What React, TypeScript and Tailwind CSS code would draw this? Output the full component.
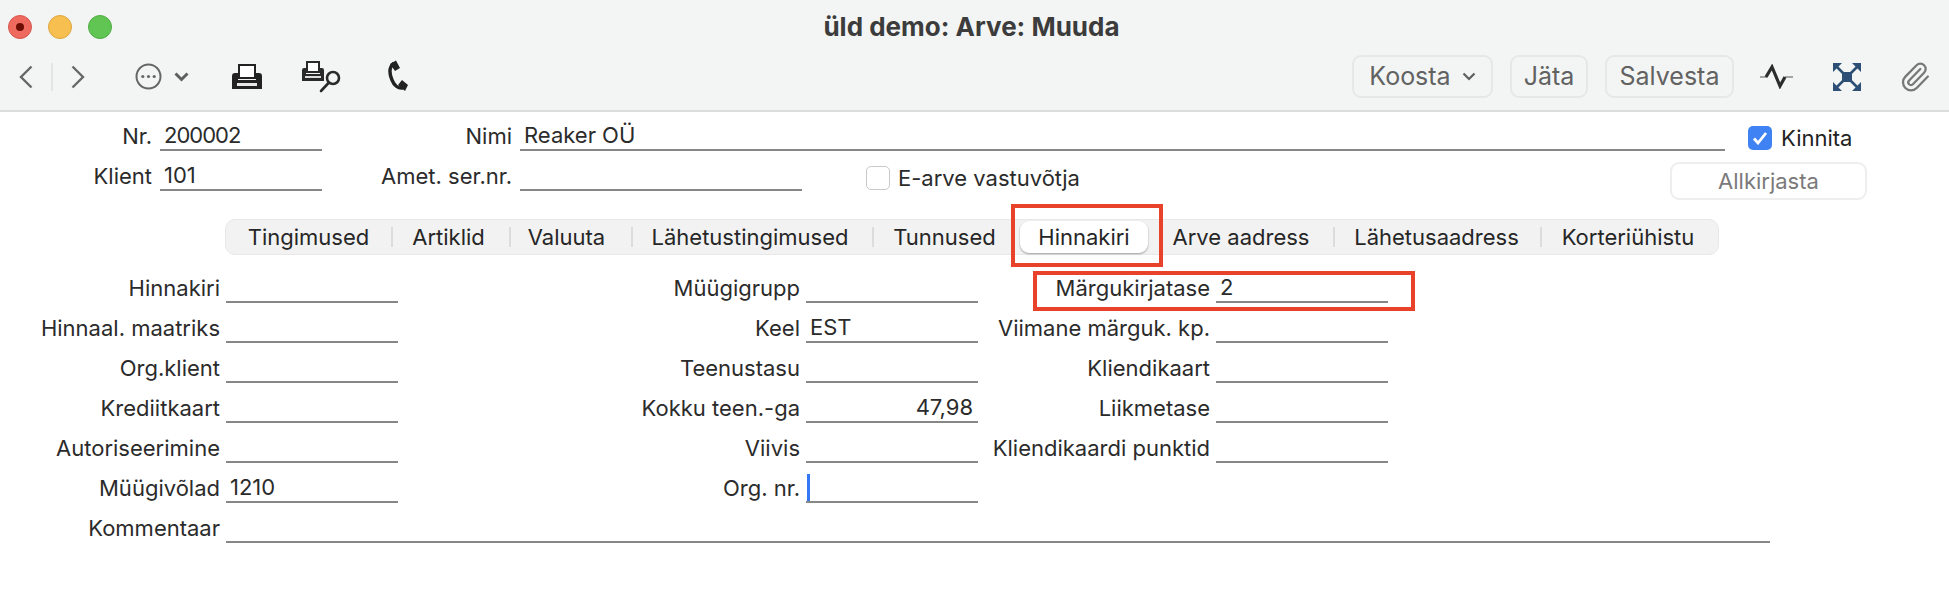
import React from "react";
import { Paperclip } from "lucide-react";

function Field({ label, value, labelW, lineW, gap = 6, right = false, pad = 4 }: { label: string; value?: React.ReactNode; labelW: number; lineW: number; gap?: number; right?: boolean; pad?: number }) {
  return (
    <div className="flex items-end shrink-0">
      <div className="text-right text-[22px] leading-[30px] text-[#2b2b2b] whitespace-nowrap" style={{ width: labelW }}>{label}</div>
      <div className={`h-[32px] border-b-2 border-[#878787] text-[22px] leading-[32px] text-[#2b2b2b] whitespace-nowrap ${right ? "text-right pr-[5px]" : ""}`} style={{ width: lineW, marginLeft: gap, paddingLeft: right ? 0 : pad }}>{value}</div>
    </div>
  );
}

function FormRow({ a, av, b, bv, c, cv, bRight, caret }: { a: string; av?: string; b: string; bv?: string; c?: string; cv?: string; bRight?: boolean; caret?: boolean }) {
  return (
    <div className="flex items-end h-[40px]">
      <Field label={a} value={av} labelW={220} lineW={172} />
      <div className="relative">
        <Field label={b} value={bv} labelW={402} lineW={172} right={bRight} />
        {caret && <div className="absolute left-[409px] bottom-[2px] w-[3px] h-[27px] bg-[#3478f6]" />}
      </div>
      {c && <Field label={c} value={cv} labelW={232} lineW={172} />}
    </div>
  );
}

function ToolButton({ children, w }: { children: React.ReactNode; w: number }) {
  return (
    <div className="h-[43px] flex items-center justify-center rounded-[9px] border-2 border-[#e6e8e7] text-[25px] text-[#626262] shrink-0" style={{ width: w }}>{children}</div>
  );
}

function Tab({ label, w, active, shift = 0 }: { label: string; w: number; active?: boolean; shift?: number }) {
  return (
    <div className="h-full flex items-center justify-center shrink-0 text-[22px] text-[#262626] whitespace-nowrap" style={{ width: w, paddingRight: shift }}>
      {active ? (
        <div className="w-[128px] h-[32px] flex items-center justify-center bg-white rounded-[9px] shadow-[0_1px_2px_rgba(0,0,0,0.35)]">{label}</div>
      ) : label}
    </div>
  );
}

const Sep = () => <div className="w-[2px] h-[20px] bg-[#dcdcdc] shrink-0" />;

export default function App() {
  return (
    <div className="relative w-[1949px] h-[590px] overflow-hidden bg-white" style={{ fontFamily: "Inter, 'Liberation Sans', sans-serif" }}>
      {/* Title bar + toolbar */}
      <header className="h-[112px] bg-[#f3f5f4] border-b-2 border-[#dcdddc]">
        <div className="relative h-[55px] flex items-center justify-center">
          <div className="absolute left-[8px] top-[15px] flex gap-[16px]">
            <div className="w-[24px] h-[24px] rounded-full bg-[#ee6a5f] border border-[#d9574d] flex items-center justify-center">
              <div className="w-[8px] h-[8px] rounded-full bg-[#6d0e05]" />
            </div>
            <div className="w-[24px] h-[24px] rounded-full bg-[#f6bf4f] border border-[#dfa63c]" />
            <div className="w-[24px] h-[24px] rounded-full bg-[#61c554] border border-[#50ad44]" />
          </div>
          <span className="text-[26px] leading-[30px] font-bold text-[#3c3c3c] pb-[2px] pr-[6px]">üld demo: Arve: Muuda</span>
        </div>
        <div className="h-[43px] flex items-center pl-[19px]">
          <svg width="14" height="24" viewBox="0 0 14 24" className="shrink-0"><path d="M12.5 1.5 2 12l10.5 10.5" fill="none" stroke="#676767" strokeWidth="2.4" /></svg>
          <div className="ml-[18px] w-[2px] h-[28px] bg-[#e3e4e3] shrink-0" />
          <svg width="14" height="24" viewBox="0 0 14 24" className="ml-[18px] shrink-0"><path d="M1.5 1.5 12 12 1.5 22.5" fill="none" stroke="#676767" strokeWidth="2.4" /></svg>
          <svg width="27" height="27" viewBox="0 0 27 27" className="ml-[50px] shrink-0">
            <circle cx="13.5" cy="13.5" r="12" fill="none" stroke="#666" strokeWidth="2" />
            <circle cx="7.8" cy="13.5" r="1.6" fill="#666" /><circle cx="13.5" cy="13.5" r="1.6" fill="#666" /><circle cx="19.2" cy="13.5" r="1.6" fill="#666" />
          </svg>
          <svg width="15" height="10" viewBox="0 0 15 10" className="ml-[12px] shrink-0"><path d="M1.5 1.5 7.5 7.5 13.5 1.5" fill="none" stroke="#5f5f5f" strokeWidth="3" /></svg>
          <svg width="32" height="26" viewBox="0 0 32 26" className="ml-[42px] shrink-0">
            <rect x="8" y="1" width="16" height="13" fill="#fff" stroke="#222" strokeWidth="2" />
            <path d="M4 9h3v7h18V9h3a3 3 0 0 1 3 3v13H1V12a3 3 0 0 1 3-3Z" fill="#222" />
            <rect x="6" y="19" width="20" height="3" fill="#e8e8e8" />
          </svg>
          <svg width="42" height="32" viewBox="0 0 42 32" className="ml-[38px] shrink-0">
            <rect x="6" y="1" width="12" height="10" fill="#fff" stroke="#2a2a2a" strokeWidth="2" />
            <path d="M3 7h2v6h14V7h2a2 2 0 0 1 2 2v11H1V9a2 2 0 0 1 2-2Z" fill="#2a2a2a" />
            <rect x="4" y="15" width="16" height="2" fill="#ddd" />
            <circle cx="32" cy="17" r="6" fill="#f3f5f4" stroke="#2a2a2a" strokeWidth="2.6" />
            <path d="M27.5 22 20 30" stroke="#2a2a2a" strokeWidth="2.6" strokeLinecap="round" />
          </svg>
          <svg width="22" height="33" viewBox="0 0 22 33" className="ml-[44px] shrink-0">
            <path d="M7 3C2 7 2 13 5 20c2 5 6 9 11 8" fill="none" stroke="#222" strokeWidth="3.4" />
            <path d="M3 4 9 0.5 13 8 8 11Z" fill="#222" />
            <path d="M11 25 15 20 21 25 18 31Z" fill="#222" />
          </svg>
          <div className="flex-1" />
          <ToolButton w={141}>
            <span className="mr-[11px]">Koosta</span>
            <svg width="14" height="9" viewBox="0 0 14 9"><path d="M1.5 1.5 7 7l5.5-5.5" fill="none" stroke="#5f5f5f" strokeWidth="2.2" /></svg>
          </ToolButton>
          <div className="ml-[17px]"><ToolButton w={78}>Jäta</ToolButton></div>
          <div className="ml-[17px]"><ToolButton w={129}>Salvesta</ToolButton></div>
          <svg width="33" height="25" viewBox="0 0 33 25" className="ml-[26px] shrink-0">
            <path d="M0 13h7M25 13h8" fill="none" stroke="#8a8a8a" strokeWidth="1.6" />
            <path d="M6 13l6-10 8 19 5-9" fill="none" stroke="#2c2c2c" strokeWidth="3.2" />
          </svg>
          <svg width="28" height="28" viewBox="0 0 28 28" className="ml-[40px] shrink-0" fill="#2e4f75" stroke="#2e4f75">
            <rect x="9" y="9" width="10" height="10" strokeWidth="0" />
            <path d="M0 0h9L0 9Z M28 0v9L19 0Z M0 28v-9L9 28Z M28 28h-9L28 19Z" strokeWidth="0" />
            <path d="M4 4 10 10M24 4 18 10M4 24 10 18M24 24 18 18" strokeWidth="2.6" />
          </svg>
          <Paperclip size={32} color="#777" strokeWidth={1.7} className="ml-[38px] mr-[18px] shrink-0" />
        </div>
      </header>

      {/* Top fields */}
      <div className="flex items-end h-[39px]">
        <Field label="Nr." value={<span className="tracking-[-1px]">200002</span>} labelW={152} lineW={162} gap={8} />
        <Field label="Nimi" value="Reaker OÜ" labelW={190} lineW={1205} gap={8} />
        <div className="flex items-center ml-[23px] h-[24px] mb-[1px]">
          <div className="w-[24px] h-[24px] rounded-[5px] bg-[#3f82f4] flex items-center justify-center">
            <svg width="16" height="14" viewBox="0 0 16 14"><path d="M2 7.500 6 12 14 2" fill="none" stroke="#fff" strokeWidth="2.8" /></svg>
          </div>
          <span className="ml-[9px] text-[22px] leading-[28px] text-[#222]">Kinnita</span>
        </div>
      </div>
      <div className="flex items-start h-[49px]">
        <div className="flex items-end h-[40px]">
          <Field label="Klient" value="101" labelW={152} lineW={162} gap={8} />
          <Field label="Amet. ser.nr." labelW={190} lineW={282} gap={8} />
          <div className="flex items-center ml-[64px] mb-[1px] h-[24px] self-end">
            <div className="w-[24px] h-[24px] rounded-[5px] border border-[#c9c9c9] bg-white shrink-0" />
            <span className="ml-[8px] text-[22px] leading-[28px] text-[#2b2b2b] whitespace-nowrap">E-arve vastuvõtja</span>
          </div>
        </div>
        <div className="ml-auto mr-[82px] mt-[11px] w-[197px] h-[38px] rounded-[9px] border-2 border-[#eeeeee] flex items-center justify-center text-[22px] text-[#7a7a7a]">Allkirjasta</div>
      </div>

      {/* Tabs */}
      <div className="mt-[19px] ml-[225px] w-[1494px] h-[36px] rounded-[10px] bg-[#f2f2f2] border border-[#e8e8e8] flex items-center">
        <Tab label="Tingimused" w={165} /><Sep />
        <Tab label="Artiklid" w={116} shift={5} /><Sep />
        <Tab label="Valuuta" w={120} shift={9} /><Sep />
        <Tab label="Lähetustingimused" w={239} shift={5} /><Sep />
        <Tab label="Tunnused" w={141} />
        <Tab label="Hinnakiri" w={138} active />
        <Tab label="Arve aadress" w={180} shift={4} /><Sep />
        <Tab label="Lähetusaadress" w={205} shift={2} /><Sep />
        <Tab label="Korteriühistu" w={176} shift={4} />
      </div>

      {/* Main form */}
      <div className="mt-[8px]">
        <FormRow a="Hinnakiri" b="Müügigrupp" c="Märgukirjatase" cv="2" />
        <FormRow a="Hinnaal. maatriks" b="Keel" bv="EST" c="Viimane märguk. kp." />
        <FormRow a="Org.klient" b="Teenustasu" c="Kliendikaart" />
        <FormRow a="Krediitkaart" b="Kokku teen.-ga" bv="47,98" bRight c="Liikmetase" />
        <FormRow a="Autoriseerimine" b="Viivis" c="Kliendikaardi punktid" />
        <FormRow a="Müügivõlad" av="1210" b="Org. nr." caret />
        <div className="flex items-end h-[40px]">
          <Field label="Kommentaar" labelW={220} lineW={1544} />
        </div>
      </div>

      {/* Red annotation boxes */}
      <div className="absolute left-[1011px] top-[204px] w-[152px] h-[63px] border-4 border-[#e8432a]" />
      <div className="absolute left-[1033px] top-[271px] w-[382px] h-[40px] border-4 border-[#e8432a]" />
    </div>
  );
}
